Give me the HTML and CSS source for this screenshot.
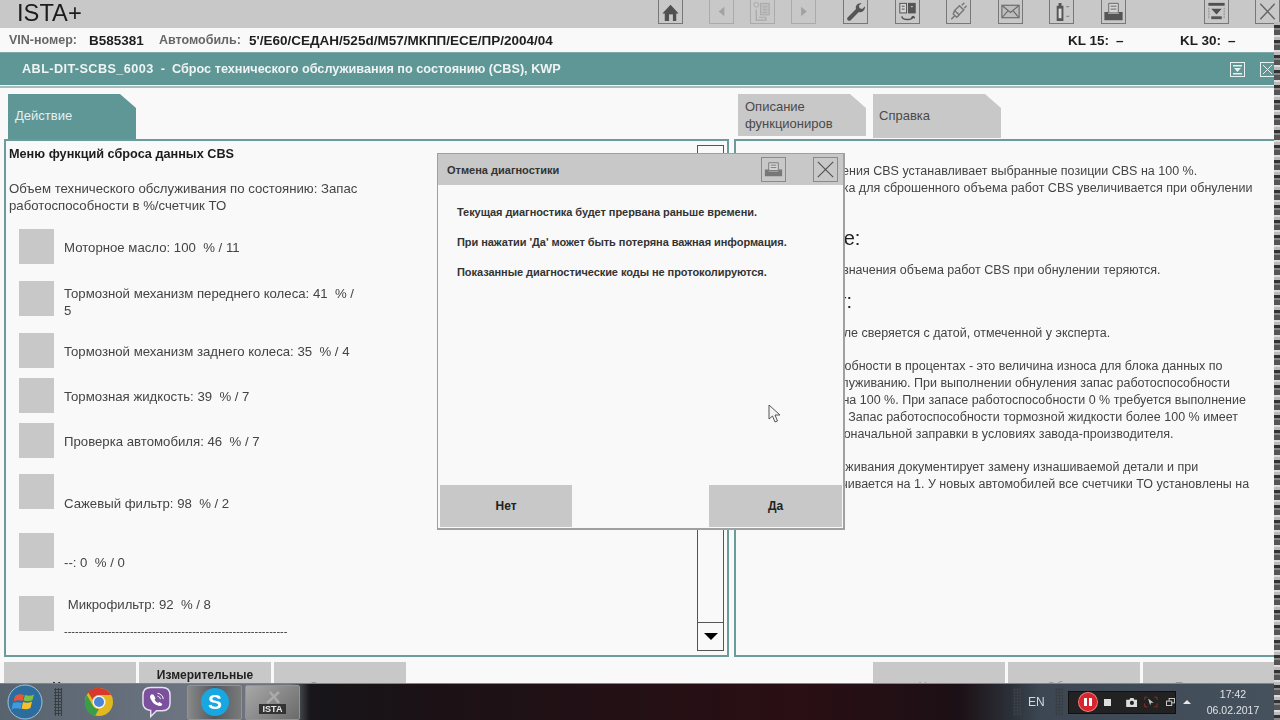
FILE: index.html
```html
<!DOCTYPE html>
<html lang="ru">
<head>
<meta charset="utf-8">
<title>ISTA+</title>
<link rel="stylesheet" href="styles.css">
</head>
<body>
<div class="app">
  <header class="toolbar">
    <div class="brand">ISTA+</div>
    <div class="tools">
      <button class="tool"><svg viewBox="0 0 23 24"><path d="M11.500 5 3 14h2.500v8h12v-8H20z" fill="#505050"/><path d="M10 15h4v7h-4z" fill="#c8c8c8"/></svg></button>
      <button class="tool off"><svg viewBox="0 0 23 24"><path d="M14.500 7v10l-6-5z" fill="#a2a2a2"/></svg></button>
      <button class="tool off"><svg viewBox="0 0 23 24" fill="none" stroke="#a8a8a8"><circle cx="5" cy="5" r="2.500"/><rect x="9.500" y="3.500" width="9" height="12" fill="#bdbdbd"/><path d="M12 7h4M12 10h4M12 13h4"/><path d="M5 10v11h10v-3M8 18h7" stroke-width="1.300"/></svg></button>
      <button class="tool off"><svg viewBox="0 0 23 24"><path d="M9 7v10l6-5z" fill="#a2a2a2"/></svg></button>
      <button class="tool"><svg viewBox="0 0 23 24"><path d="M3.500 21c-1-1-1-2 0-3l8.500-8.500c-1-3.500 1.500-6.500 6-6.500l-3 3 .8 2.700 2.700.8 3-3c0 4.500-3 7-6.500 6L6.500 21c-1 1-2 1-3 0z" fill="#555"/></svg></button>
      <button class="tool"><svg viewBox="0 0 23 24" fill="none" stroke="#505050"><rect x="3.500" y="3.500" width="7" height="10" fill="#d4d4d4"/><rect x="12.500" y="3.500" width="7" height="10" fill="#555"/><path d="M5.500 6.500h3M5.500 9.500h3"/><path d="M15 7h2" stroke="#ddd"/><path d="M5.500 17c1 4.500 11 4.500 12 0M17.500 17l-2 1.500M17.500 17l1.500 2" stroke-width="1.500"/></svg></button>
      <button class="tool"><svg viewBox="0 0 23 24" fill="none" stroke="#777" stroke-width="1.500"><path d="m7.500 11 5-5 4.500 4.500-5 5zM4 20l3.500-3.500M15 5.500 17.500 3M17.500 8.500 20 6M7.500 11 6 14.500 9.500 18l3-2.500"/></svg></button>
      <button class="tool"><svg viewBox="0 0 23 24" fill="none" stroke="#6a6a6a" stroke-width="1.200"><rect x="2.500" y="5.500" width="18" height="13" fill="#bdbdbd"/><path d="m3 6 8.500 7L20 6M3 18l6-7M20 18l-6-7"/></svg></button>
      <button class="tool"><svg viewBox="0 0 23 24"><path d="M6.500 6h2V3h3v3h2v16h-7z" fill="#555"/><rect x="8.500" y="9" width="3" height="10" fill="#dcdcdc"/><path d="M16.500 7h3M16.500 17h3" stroke="#777"/></svg></button>
      <button class="tool"><svg viewBox="0 0 23 24"><path d="M6.500 3.500h10v10h-10z" fill="#d4d4d4" stroke="#666"/><path d="M8.500 6.500h6M8.500 9.500h6" stroke="#666"/><path d="M2 12.500h4v2h11v-2h4V21H2z" fill="#555"/></svg></button>
      <button class="tool far"><svg viewBox="0 0 23 24"><path d="M3 3h17v3H3z" fill="#505050"/><path d="M3.500 8v11M19.500 8v11" fill="none" stroke="#888" stroke-dasharray="2 1"/><path d="M6 9h11l-5.500 6z" fill="#505050"/><path d="M6 17h11v3H6z" fill="#555"/></svg></button>
      <button class="tool"><svg viewBox="0 0 23 24" fill="none" stroke="#666" stroke-width="1.500"><path d="m4 4 15 16M19 4 4 20"/></svg></button>
    </div>
  </header>

  <section class="info">
    <span class="label vin-label">VIN-номер:</span>
    <span class="value vin-value">B585381</span>
    <span class="label car-label">Автомобиль:</span>
    <span class="value car-value">5'/E60/СЕДАН/525d/M57/МКПП/ЕСЕ/ПР/2004/04</span>
    <span class="value kl15">KL 15:</span>
    <span class="value kl-dash">–</span>
    <span class="value kl30">KL 30:</span>
    <span class="value kl-end">–</span>
  </section>

  <section class="titlebar">
    <h1 class="title"><span class="code">ABL-DIT-SCBS_6003</span>&nbsp; - &nbsp;Сброс технического обслуживания по состоянию (CBS), KWP</h1>
    <div class="title-icons">
      <svg class="mini" viewBox="0 0 15 15"><rect x=".5" y=".5" width="14" height="14" fill="#5f9696" stroke="#e8f0f0"/><rect x="3" y="3" width="9" height="1.500" fill="#e8f0f0"/><path d="M4 6h7l-3.500 4z" fill="#e8f0f0"/><rect x="3" y="11" width="9" height="1.500" fill="#e8f0f0"/></svg>
      <svg class="mini" viewBox="0 0 15 15" fill="none" stroke="#e8f0f0"><rect x=".5" y=".5" width="14" height="14"/><path d="m3 3 9 9M12 3l-9 9"/></svg>
    </div>
  </section>
  <div class="rule"></div>

  <nav class="tabs">
    <div class="tab active">Действие</div>
    <div class="tab desc">Описание функциониров</div>
    <div class="tab help">Справка</div>
  </nav>

  <main class="panels">
    <section class="panel left">
      <div class="list">
        <h2 class="list-title">Меню функций сброса данных CBS</h2>
        <p class="intro">Объем технического обслуживания по состоянию: Запас работоспособности в %/счетчик ТО</p>
        <div class="row r52"><span class="box"></span><span class="txt">Моторное масло: 100&nbsp; % / 11</span></div>
        <div class="row r52 wrap"><span class="box"></span><span class="txt">Тормозной механизм переднего колеса: 41&nbsp; % / 5</span></div>
        <div class="row r45"><span class="box"></span><span class="txt">Тормозной механизм заднего колеса: 35&nbsp; % / 4</span></div>
        <div class="row r45"><span class="box"></span><span class="txt">Тормозная жидкость: 39&nbsp; % / 7</span></div>
        <div class="row r51"><span class="box"></span><span class="txt">Проверка автомобиля: 46&nbsp; % / 7</span></div>
        <div class="row r59"><span class="box"></span><span class="txt">Сажевый фильтр: 98&nbsp; % / 2</span></div>
        <div class="row r63"><span class="box"></span><span class="txt">--: 0&nbsp; % / 0</span></div>
        <div class="row last"><span class="box"></span><span class="txt">&nbsp;Микрофильтр: 92&nbsp; % / 8<br><span class="dashes">-------------------------------------------------------------</span></span></div>
      </div>
      <div class="scrollbar">
        <div class="scroll-btn"></div>
        <div class="scroll-track"></div>
        <div class="scroll-btn"><span class="arrow"></span></div>
      </div>
    </section>
    <section class="panel right">
      <p class="rt fwd6">Функция обновления CBS устанавливает выбранные позиции CBS на 100 %.</p>
      <p class="rt back3">Показания счетчика для сброшенного объема работ CBS увеличивается при обнулении</p>
      <h3 class="rh one">Примечание:</h3>
      <p class="rt back2">Все предыдущие значения объема работ CBS при обнулении теряются.</p>
      <h3 class="rh two">Сверка дат:</h3>
      <p class="rt fwd5">Дата в автомобиле сверяется с датой, отмеченной у эксперта.</p>
      <p class="rt gap16 back2">Запас работоспособности в процентах - это величина износа для блока данных по</p>
      <p class="rt back4">техническому обслуживанию. При выполнении обнуления запас работоспособности</p>
      <p class="rt back1">устанавливается на 100 %. При запасе работоспособности 0 % требуется выполнение</p>
      <p class="rt fwd4">этого обнуления. Запас работоспособности тормозной жидкости более 100 % имеет</p>
      <p class="rt back1">место после первоначальной заправки в условиях завода-производителя.</p>
      <p class="rt gap16 back12">Счетчик вида обслуживания документирует замену изнашиваемой детали и при</p>
      <p class="rt">обнулении увеличивается на 1. У новых автомобилей все счетчики ТО установлены на</p>
    </section>
  </main>

  <footer class="actions">
    <div class="act-group">
      <div class="act bold low-text">Назад</div>
      <div class="act bold">Измерительные</div>
      <div class="act faint low-text">Документы</div>
    </div>
    <div class="act-group">
      <div class="act faint low-text">Наверх</div>
      <div class="act faint low-text">Обновить</div>
      <div class="act faint low-text">Продолжить</div>
    </div>
  </footer>
</div>

<div class="edge"></div>

<div class="dialog">
  <div class="dlg-head">
    <span class="dlg-title">Отмена диагностики</span>
    <div class="dlg-tools">
      <span class="dlg-btn"><svg viewBox="0 0 24 24"><path d="M7 5h10v8H7z" fill="#d8d8d8" stroke="#777"/><path d="M9 7.500h6M9 10h6" stroke="#777"/><path d="M3 12h4v2h10v-2h4v7H3z" fill="#777"/></svg></span>
      <span class="dlg-btn"><svg viewBox="0 0 24 24" fill="none" stroke="#555" stroke-width="1.300"><path d="m4 4 16 16M20 4 4 20"/></svg></span>
    </div>
  </div>
  <div class="dlg-body">
    <p>Текущая диагностика будет прервана раньше времени.</p>
    <p>При нажатии 'Да' может быть потеряна важная информация.</p>
    <p>Показанные диагностические коды не протоколируются.</p>
  </div>
  <div class="dlg-actions">
    <div class="dlg-action">Нет</div>
    <div class="dlg-action">Да</div>
  </div>
</div>

<svg class="cursor" viewBox="0 0 13 20"><path d="M1 1v14l3.500-3 2.500 6 2.500-1-2.500-6H12z" fill="#f4f4f4" stroke="#555"/></svg>

<div class="taskbar">
  <svg class="orb" viewBox="0 0 36 36"><circle cx="18" cy="18" r="17" fill="#2c6d9e" stroke="#9fc3dc"/><path d="M8 12c3-2 6-2 9-1l-1.500 6c-3-1-6-1-9 .5z" fill="#e8553a"/><path d="M18 11c3 1 6 1 9-.5L25.500 16c-3 1.500-6 1.500-9 .5z" fill="#7cc142"/><path d="M6 19c3-1 6-1 9 0l-1.500 6c-3-1-6-1-9 .5z" fill="#3f9ade"/><path d="M16 18c3 1 6 1 9-.5L23.500 24c-3 1.500-6 1.500-9 .5z" fill="#f6c02c"/></svg>
  <span class="grip g1"></span>
  <svg class="tb-icon chrome" viewBox="0 0 30 30"><circle cx="15" cy="15" r="14" fill="#e3b81f"/><path d="M15 1a14 14 0 0 1 12.100 7H15a7 7 0 0 0-6.500 4.500L4 5a14 14 0 0 1 11-4z" fill="#d8392e"/><path d="M2.900 8 9 19a7 7 0 0 0 6 3l-4 7A14 14 0 0 1 2.900 8z" fill="#3a9e49"/><circle cx="15" cy="15" r="6.500" fill="#f4f4f4"/><circle cx="15" cy="15" r="5" fill="#4a86d8"/></svg>
  <svg class="tb-icon viber" viewBox="0 0 30 32"><path d="M9 1h12c5 0 8 3 8 8v8c0 5-3 8-8 8h-6l-6 6v-6.300C4 24 1 21 1 17V9c0-5 3-8 8-8z" fill="#7b519d" stroke="#e8e0f0" stroke-width="1.500"/><path d="M10 8c-2 1-2 3-1 5 2 4 4 6 8 7 2 .5 4-.5 4-2l-3-2-1.500 1c-1.500-.5-3-2-3.500-3.500l1-1.500-2-3.500z" fill="#fff"/><path d="M16 7c3 0 6 3 6 6M16 10c1.500 0 3 1.500 3 3" fill="none" stroke="#fff"/></svg>
  <div class="task-btn"><svg class="tb-skype" viewBox="0 0 30 30"><circle cx="15" cy="15" r="14" fill="#18a7e0"/><text class="skype-s" x="15" y="22" text-anchor="middle">S</text></svg></div>
  <div class="task-btn ista"><svg class="tb-tools" viewBox="0 0 30 14"><path d="m9 13 12-11M12 2l9 11" stroke="#aaa" stroke-width="2.500" fill="none"/></svg><span class="ista-word">ISTA</span></div>
  <div class="tray">
    <span class="grip g3"></span>
    <span class="lang">EN</span>
    <span class="grip g2"></span>
    <div class="recorder">
      <span class="rec-pause"><span class="bar"></span><span class="bar"></span></span>
      <span class="rec-stop"></span>
      <svg class="rec-cam" viewBox="0 0 14 11"><path d="M0 2h4l1-2h4l1 2h4v9H0z" fill="#ddd"/><circle cx="7" cy="6" r="2.500" fill="#222"/></svg>
      <svg class="rec-cur" viewBox="0 0 20 16"><path d="M6 3 14 9l-4 0-1 4z" fill="#ccc"/><path d="M1 10v5h4M19 10v5h-4M1 5V1h4M19 5V1h-4" fill="none" stroke="#b53a22"/></svg>
      <svg class="rec-win" viewBox="0 0 10 9" fill="none" stroke="#ddd"><rect x="3.500" y=".5" width="6" height="5"/><rect x=".5" y="3.500" width="6" height="5" fill="#222"/></svg>
    </div>
    <span class="tray-up"></span>
    <div class="clock"><div>17:42</div><div>06.02.2017</div></div>
  </div>
</div>
</body>
</html>
```
FILE: styles.css
```css
* { box-sizing: border-box; }
html, body { margin: 0; height: 720px; overflow: hidden; }
body { position: relative; width: 1280px; background: #f9f9f9; font-family: "Liberation Sans", Arial, sans-serif; font-size: 13.2px; color: #444; filter: blur(.3px); }
p, h1, h2, h3 { margin: 0; }

.app { width: 1280px; height: 720px; overflow: hidden; }

.toolbar { height: 28px; background: #c8c8c8; display: flex; justify-content: space-between; padding-left: 17px; }
.brand { font-size: 23.700px; line-height: 27px; color: #1c1c1c; }
.tools { display: flex; width: 622px; }
.tool { width: 25px; height: 24px; padding: 0; background: #c8c8c8; border: 1px solid #777; border-top: 0; margin-right: 26.500px; flex: none; }
.tool svg { display: block; width: 23px; height: 23px; }
.tool.off { border-color: #aaa; margin-right: 16px; }
.tool:nth-child(4) { margin-right: 27px; }
.tool:first-child { margin-right: 26px; }
.tool.far { margin-right: 26px; }
.tool:nth-child(10) { margin-right: 78px; }

.info { height: 25px; display: flex; align-items: center; font-weight: bold; white-space: nowrap; border-bottom: 1px solid #7fa8a8; }
.label { color: #666; font-size: 12.500px; flex: none; }
.value { color: #1e1e1e; font-size: 13.500px; flex: none; }
.vin-label { margin-left: 9px; width: 80px; }
.vin-value { width: 70px; }
.car-label { width: 90px; }
.car-value { width: 819px; }
.kl15 { width: 48px; }
.kl30 { width: 48px; }
.kl-dash { width: 64px; }
.kl-end { width: 52px; }

.titlebar { height: 32px; background: #5f9696; display: flex; align-items: center; justify-content: space-between; padding: 0 5px 0 22px; }
.title { font-size: 12.700px; font-weight: bold; color: #eef4f4; }
.code { letter-spacing: .4px; }
.title-icons { display: flex; gap: 15px; }
.mini { display: block; width: 15px; height: 15px; }
.rule { height: 2px; margin-top: 1px; background: #a9bcbc; }

.tabs { height: 51px; padding-top: 6px; display: flex; align-items: flex-start; padding-left: 8px; color: #4a4a4a; font-size: 13px; }
.tab { width: 128px; background: #c8c8c8; clip-path: polygon(0 0, 112px 0, 100% 14px, 100% 100%, 0 100%); display: flex; align-items: center; padding: 0 18px 0 7px; line-height: 17px; }
.tab.active { height: 45px; padding-bottom: 3px; background: #5f9696; color: #e6efef; }
.tab.desc { height: 42px; margin-left: 602px; }
.tab.help { height: 44px; margin-left: 7px; padding-left: 6px; padding-bottom: 2px; }

.panels { height: 518px; display: flex; padding-left: 4px; gap: 5px; }
.panel { height: 518px; border: 2px solid #6b9c9c; flex: none; }
.left { width: 725px; display: flex; justify-content: space-between; padding: 4px 3px 4px 0; }
.right { width: 560px; padding: 22px 0 0 6px; font-size: 12.500px; }

.list { width: 360px; padding: 1px 0 0 3px; }
.list-title { font-size: 12.700px; font-weight: bold; color: #1c1c1c; line-height: 17px; }
.intro { margin-top: 17px; line-height: 17px; width: 352px; }
.row { display: grid; grid-template-columns: 35px 296px; column-gap: 10px; margin-left: 10px; line-height: 17px; align-items: start; }
.intro + .row { margin-top: 15px; }
.box { width: 35px; height: 35px; background: #c8c8c8; display: block; }
.r52 { height: 52px; }
.r52 .txt { padding-top: 10px; }
.r52.wrap .txt { padding-top: 4px; }
.r45 { height: 45px; }
.r45 .txt { padding-top: 10px; }
.r51 { height: 51px; }
.r51 .txt { padding-top: 10px; }
.r59 { height: 59px; }
.r59 .txt { padding-top: 21px; }
.r63 { height: 63px; }
.r63 .txt { padding-top: 21px; }
.last .txt { white-space: nowrap; }
.dashes { display: block; margin-top: 10px; color: #333; font-size: 11px; }

.scrollbar { width: 27px; height: 506px; border: 1px solid #555; display: flex; flex-direction: column; justify-content: space-between; }
.scroll-btn { height: 28px; display: flex; align-items: center; justify-content: center; }
.scroll-btn:first-child { border-bottom: 1px solid #555; }
.scroll-btn:last-child { border-top: 1px solid #555; }
.scroll-track { flex: 1; }
.arrow { width: 0; height: 0; border-left: 7px solid transparent; border-right: 7px solid transparent; border-top: 7px solid #000; }

.rt { line-height: 17px; white-space: nowrap; color: #444; }
.rh { font-weight: normal; font-size: 20px; color: #222; white-space: nowrap; line-height: 22px; }
.rh.one { margin-top: 30px; margin-bottom: 13px; margin-left: -3px; }
.rh.two { margin-top: 11px; margin-bottom: 13px; }
.gap16 { margin-top: 16px; }
.back1 { margin-left: -1px; }
.back2 { margin-left: -2px; }
.back3 { margin-left: -3px; }
.back4 { margin-left: -4px; }
.back12 { margin-left: -12px; }
.fwd4 { margin-left: 4px; }
.fwd5 { margin-left: 5px; }
.fwd6 { margin-left: 6px; }

.actions { display: flex; justify-content: space-between; padding: 5px 5px 0 4px; }
.act-group { display: flex; gap: 3px; }
.act { width: 132px; height: 42px; background: #c8c8c8; text-align: center; padding-top: 5px; font-size: 12px; line-height: 16px; }
.act.bold { font-weight: bold; color: #222; }
.act.faint { color: #999; }
.act.low-text { padding-top: 17px; }

.edge { position: absolute; right: 0; top: 22px; width: 6px; height: 698px; background: repeating-linear-gradient(180deg, #bbb 0 3px, #333 3px 6px, #888 6px 8px, #555 8px 13px, #ddd 13px 15px); }

.dialog { position: absolute; left: 437px; top: 153px; width: 408px; height: 377px; background: #f9f9f9; border: 1px solid #a0a0a0; border-width: 1px 2px 2px 1px; display: flex; flex-direction: column; }
.dlg-head { height: 31px; background: #c8c8c8; display: flex; align-items: center; justify-content: space-between; padding: 0 5px 0 9px; }
.dlg-title { font-size: 11px; font-weight: bold; color: #333; }
.dlg-tools { display: flex; gap: 27px; }
.dlg-btn { width: 25px; height: 25px; border: 1px solid #8a8a8a; display: block; }
.dlg-btn svg { display: block; width: 23px; height: 23px; }
.dlg-body { flex: 1; padding: 19px 0 0 19px; font-size: 11px; letter-spacing: -.06px; font-weight: bold; color: #333; line-height: 17px; }
.dlg-body p { margin-bottom: 13px; }
.dlg-actions { display: flex; justify-content: space-between; padding: 0 1px 1px 2px; }
.dlg-action { width: 132px; height: 42px; background: #c8c8c8; display: flex; align-items: center; justify-content: center; font-weight: bold; font-size: 12px; color: #222; }
.dlg-action:last-child { width: 133px; }

.cursor { position: absolute; left: 768px; top: 404px; width: 13px; height: 20px; }

.taskbar { position: absolute; left: 0; right: 6px; bottom: 0; height: 37px; display: flex; align-items: center; border-top: 1px solid #7b8590; background: linear-gradient(90deg, #58636e 0, #6b7480 180px, #6d737a 290px, #17161a 310px, #1a1216 400px, #2a0f14 800px, #1b1015 960px, #2b3038 1010px, #3c4753 1040px, #46515e 100%); }
.orb { width: 36px; height: 36px; margin-left: 7px; flex: none; }
.grip { width: 8px; height: 28px; flex: none; background: radial-gradient(#3a3f45 1px, transparent 1.200px) 0 0 / 3px 3px; }
.g1 { margin-left: 11px; }
.tb-icon { flex: none; display: block; }
.chrome { width: 30px; height: 30px; margin-left: 22px; }
.viber { width: 29px; height: 32px; margin-left: 28px; }
.task-btn { width: 55px; height: 35px; margin-left: 16px; border: 1px solid #8d949b; border-radius: 2px; background: linear-gradient(90deg, #888, #55595f 50%, #7a7a7a); display: flex; align-items: center; justify-content: center; flex: none; }
.task-btn.ista { margin-left: 3px; flex-direction: column; background: linear-gradient(135deg, #a8a8a8, #6a6a6a); }
.tb-skype { width: 30px; height: 30px; }
.skype-s { font-family: "Liberation Sans", Arial, sans-serif; font-weight: bold; font-size: 21px; fill: #fff; }
.tb-tools { width: 30px; height: 14px; }
.ista-word { font-size: 9px; line-height: 10px; font-weight: bold; color: #e8e8e8; background: #333; padding: 0 4px; }
.tray { margin-left: auto; display: flex; align-items: center; color: #ddd; }
.g3 { margin-right: 7px; }
.lang { font-size: 12px; width: 27px; color: #d4d8dc; }
.g2 { margin-right: 5px; }
.recorder { width: 108px; height: 23px; background: #222; border: 1px solid #111; display: flex; align-items: center; flex: none; }
.rec-pause { width: 20px; height: 20px; margin-left: 9px; border-radius: 50%; background: #d8242c; border: 1px solid #f0777c; display: flex; align-items: center; justify-content: center; gap: 2px; }
.bar { width: 3px; height: 8px; background: #fff; }
.rec-stop { width: 7px; height: 7px; background: #ddd; margin-left: 6px; }
.rec-cam { width: 12px; height: 9px; margin-left: 15px; }
.rec-cur { width: 14px; height: 14px; margin-left: 7px; }
.rec-win { width: 9px; height: 8px; margin-left: 8px; }
.tray-up { width: 0; height: 0; margin-left: 7px; border-left: 4px solid transparent; border-right: 4px solid transparent; border-bottom: 4px solid #e8e8e8; }
.clock { width: 62px; margin-left: 11px; margin-right: 10px; text-align: center; font-size: 10.500px; line-height: 16px; color: #dfe3e6; white-space: nowrap; }
```
